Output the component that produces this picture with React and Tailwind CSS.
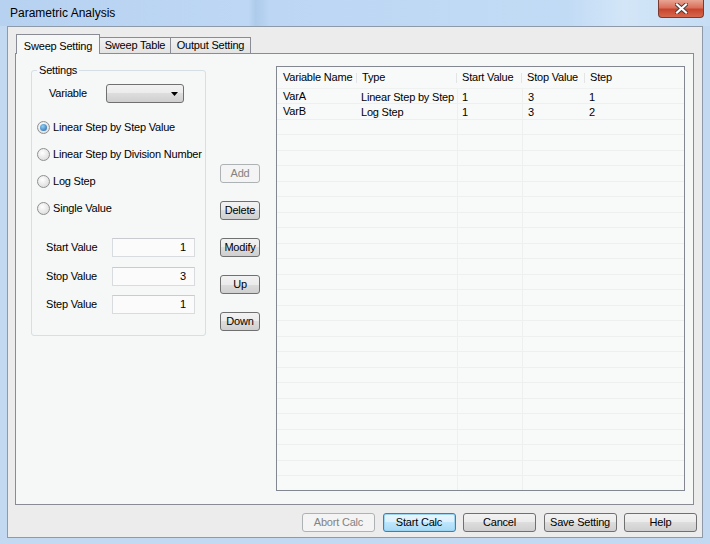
const btn =
  "flex items-center justify-center whitespace-nowrap rounded-[3px] border border-[#707070] bg-[linear-gradient(#f2f2f2_0%,#ebebeb_50%,#dddddd_50%,#cfcfcf_100%)] text-[11px] leading-none text-black";
const btnOff =
  "flex items-center justify-center whitespace-nowrap rounded-[3px] border border-[#adb2b5] bg-[#f4f4f4] text-[11px] leading-none text-[#838383]";
const btnDefault =
  "flex items-center justify-center whitespace-nowrap rounded-[3px] border border-[#3c7fb1] bg-[linear-gradient(#eaf6fd_0%,#d9f0fc_50%,#bee6fd_50%,#a7d9f5_100%)] text-[11px] leading-none text-black shadow-[inset_0_0_0_1px_#9fd3f2]";

const Radio = ({ label, checked }) => (
  <div className="flex h-[14px] items-center whitespace-nowrap">
    <span className="flex h-[13px] w-[13px] shrink-0 items-center justify-center rounded-full border border-[#8e8f8f] bg-[radial-gradient(circle_at_40%_35%,#ffffff,#d4d4d4)]">
      {checked && (
        <span className="h-[7px] w-[7px] rounded-full bg-[radial-gradient(circle_at_40%_35%,#8fd0f5,#1c5fa8)]" />
      )}
    </span>
    <span className="ml-[3px] text-[11px] text-black">{label}</span>
  </div>
);

const ValueRow = ({ label, value }) => (
  <div className="flex h-[19px] items-center whitespace-nowrap">
    <span className="ml-[9px] w-[66px] text-[11px] text-black">{label}</span>
    <div className="flex h-[19px] w-[83px] items-center justify-end border border-[#d9dcdf] border-t-[#c8cbcf] bg-[#fbfbfb] pr-[8px] text-[11px] text-black">
      {value}
    </div>
  </div>
);

const cols = [
  { name: "Variable Name", w: "w-[80px]" },
  { name: "Type", w: "w-[100px]" },
  { name: "Start Value", w: "w-[65px]" },
  { name: "Stop Value", w: "w-[63px]" },
  { name: "Step", w: "flex-1" },
];

const data = [
  ["VarA", "Linear Step by Step", "1", "3", "1"],
  ["VarB", "Log Step", "1", "3", "2"],
];

const rows = Array.from({ length: 27 }, (_, i) => data[i] || ["", "", "", "", ""]);

export default function App() {
  return (
    <div className="flex h-[544px] w-[710px] flex-col overflow-hidden bg-[#c3d9f1] font-['Liberation_Sans',Arial,sans-serif] tracking-[-0.2px] text-black">
      {/* title bar */}
      <div className="flex h-[26px] shrink-0 items-start justify-between bg-[linear-gradient(90deg,#b7d2f1_0%,#bdd7f4_35%,#aecbeb_36%,#bcd6f4_38%,#c2dbf5_80%,#d3e6f8_88%,#c6ddf4_100%)]">
        <span className="ml-[10px] mt-[6px] text-[12px] leading-[14px] tracking-normal text-black">Parametric Analysis</span>
        <div className="mr-[6px] flex h-[18px] w-[46px] items-center justify-center rounded-b-[4px] border border-t-0 border-[#7a3a30] bg-[linear-gradient(#e9a493_0%,#d9705c_45%,#c7452d_55%,#d6684d_100%)]">
          <svg width="13" height="11" viewBox="0 0 13 11">
            <path d="M2 1.5 L11 9.5 M11 1.5 L2 9.5" stroke="#4a3a3a" strokeWidth="4" strokeLinecap="square" />
            <path d="M2 1.5 L11 9.5 M11 1.5 L2 9.5" stroke="#ffffff" strokeWidth="2.2" strokeLinecap="square" />
          </svg>
        </div>
      </div>

      {/* client area */}
      <div className="mx-[7px] mb-[6px] flex flex-1 flex-col border border-[#8e9aa8] bg-[#ececec] pl-[7px] pr-[8px] pt-[7px]">
        {/* tabs */}
        <div className="flex h-[19px] items-end pl-[1px]">
          <div className="relative z-10 -mb-px flex h-[20px] w-[84px] items-start justify-center whitespace-nowrap border border-b-0 border-[#898c95] bg-[#f6f7f7] pt-[3px] text-[11px]">
            Sweep Setting
          </div>
          <div className="flex h-[16px] w-[71px] items-center justify-center whitespace-nowrap border border-l-0 border-b-0 border-[#898c95] bg-[linear-gradient(#f2f2f2,#e3e3e3)] text-[11px]">
            Sweep Table
          </div>
          <div className="flex h-[16px] w-[80px] items-center justify-center whitespace-nowrap border border-l-0 border-b-0 border-[#898c95] bg-[linear-gradient(#f2f2f2,#e3e3e3)] text-[11px]">
            Output Setting
          </div>
        </div>

        {/* tab panel */}
        <div className="flex h-[452px] border border-[#898c95] bg-[#f6f7f7] pl-[15px]">
          {/* settings group */}
          <fieldset className="mt-[10px] h-[272px] w-[175px] min-w-0 shrink-0 rounded-[3px] border border-[#d5dfe5] pl-[5px]">
            <legend className="px-[2px] text-[11px] leading-[13px]">Settings</legend>
            <div className="mt-[7px] flex h-[19px] items-center whitespace-nowrap">
              <span className="ml-[12px] w-[57px] text-[11px]">Variable</span>
              <div className="flex h-[19px] w-[78px] items-center justify-end rounded-[3px] border border-[#707070] bg-[linear-gradient(#f2f2f2_0%,#ebebeb_50%,#dddddd_50%,#cfcfcf_100%)] pr-[5px]">
                <svg width="7" height="4" viewBox="0 0 7 4">
                  <path d="M0 0 H7 L3.5 4 Z" fill="#000" />
                </svg>
              </div>
            </div>
            <div className="mt-[17px] flex flex-col gap-[13px]">
              <Radio label="Linear Step by Step Value" checked />
              <Radio label="Linear Step by Division Number" />
              <Radio label="Log Step" />
              <Radio label="Single Value" />
            </div>
            <div className="mt-[23px] flex flex-col gap-[9.5px]">
              <ValueRow label="Start Value" value="1" />
              <ValueRow label="Stop Value" value="3" />
              <ValueRow label="Step Value" value="1" />
            </div>
          </fieldset>

          {/* action buttons */}
          <div className="ml-[14px] flex flex-col gap-[18px] pt-[110px]">
            <div className={`${btnOff} h-[19px] w-[40px]`}>Add</div>
            <div className={`${btn} h-[19px] w-[40px]`}>Delete</div>
            <div className={`${btn} h-[19px] w-[40px]`}>Modify</div>
            <div className={`${btn} h-[19px] w-[40px]`}>Up</div>
            <div className={`${btn} h-[19px] w-[40px]`}>Down</div>
          </div>

          {/* sweep list */}
          <div className="ml-[16px] mt-[12px] flex h-[425px] w-[409px] flex-col overflow-hidden border border-[#828790] bg-[#f8f9f9]">
            <div className="flex h-[22px] shrink-0 border-b border-[#f0f1f1]">
              {cols.map((c, i) => (
                <div key={c.name} className={`${c.w} flex items-center whitespace-nowrap`}>
                  <span className={`${i === 0 ? "pl-[6px]" : "pl-[5px]"} flex-1 text-[11px]`}>{c.name}</span>
                  {i < 4 && <span className="h-[10px] w-px bg-[#e2e4e6]" />}
                </div>
              ))}
            </div>
            {rows.map((r, ri) => (
              <div
                key={ri}
                className={`flex shrink-0 border-b border-[#eef0f0] ${ri % 2 ? "h-[16px]" : "h-[15px]"}`}
              >
                {cols.map((c, i) => (
                  <div
                    key={c.name}
                    className={`${c.w} flex items-center whitespace-nowrap text-[11px] leading-none ${
                      i === 2 || i === 3 ? "border-l border-[#eef0f0]" : ""
                    } ${i === 0 ? "pl-[6px]" : i === 3 ? "pl-[5px]" : "pl-[4px]"} ${i > 0 ? "pt-[2px]" : ""}`}
                  >
                    {r[i]}
                  </div>
                ))}
              </div>
            ))}
          </div>
        </div>

        {/* footer */}
        <div className="mr-[-3px] mt-[8px] flex justify-end gap-[7.5px]">
          <div className={`${btnOff} h-[19px] w-[73px]`}>Abort Calc</div>
          <div className={`${btnDefault} h-[19px] w-[73px]`}>Start Calc</div>
          <div className={`${btn} h-[19px] w-[73px]`}>Cancel</div>
          <div className={`${btn} h-[19px] w-[73px]`}>Save Setting</div>
          <div className={`${btn} h-[19px] w-[73px]`}>Help</div>
        </div>
      </div>
    </div>
  );
}
